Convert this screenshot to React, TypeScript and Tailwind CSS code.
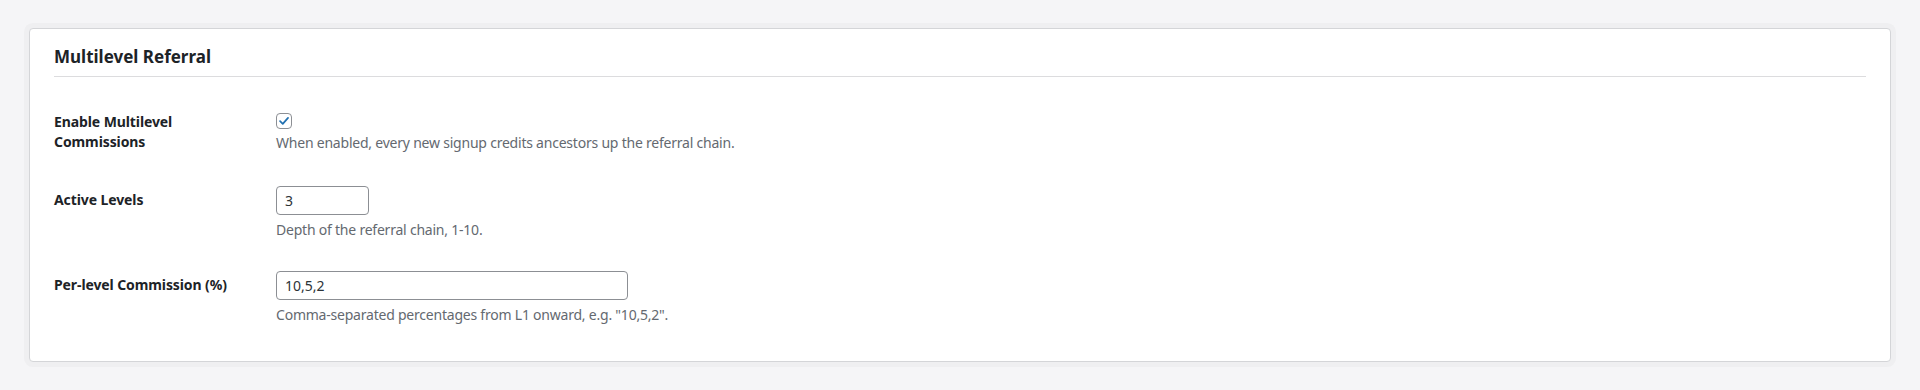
import { useState } from "react";

const font = { fontFamily: '"Noto Sans", "Open Sans", sans-serif' };

const Row = ({ label, children, className = "" }) => (
  <div className={`flex ${className}`}>
    <div className="w-[222px] shrink-0 text-[14px] font-bold leading-[20px] tracking-[-0.1px] text-[#1d2327] pr-4">
      {label}
    </div>
    <div className="flex-1">{children}</div>
  </div>
);

export default function App() {
  const [enabled, setEnabled] = useState(true);
  const [levels, setLevels] = useState("3");
  const [rates, setRates] = useState("10,5,2");

  return (
    <div className="min-h-[390px] bg-[#f5f5f7] pt-[28px] px-[29px]" style={font}>
      <div className="rounded-[4px] border border-[#d4d5d8] bg-white px-[24px] shadow-[0_0_0_5px_#efeff1]">
        <h2 className="pt-[17px] pb-[8px] text-[17px] font-bold leading-[22px] text-[#1d2327]">
          Multilevel Referral
        </h2>
        <div className="border-b border-[#dcdcde]" />

        <Row
          className="mt-[35px]"
          label={
            <>
              Enable Multilevel
              <br />
              Commissions
            </>
          }
        >
          <button
            type="button"
            onClick={() => setEnabled(!enabled)}
            className="mt-[1px] flex h-[16px] w-[16px] items-center justify-center rounded-[4px] border border-[#8c8f94] bg-white"
          >
            {enabled && (
              <svg viewBox="0 0 16 16" className="h-[14px] w-[14px]">
                <path
                  d="M3.5 8.2 L6.6 11.2 L12.6 4.4"
                  fill="none"
                  stroke="#2271b1"
                  strokeWidth="2"
                  strokeLinecap="round"
                  strokeLinejoin="round"
                />
              </svg>
            )}
          </button>
          <p className="mt-[4px] text-[14px] leading-[20px] tracking-[-0.22px] text-[#646970]">
            When enabled, every new signup credits ancestors up the referral chain.
          </p>
        </Row>

        <Row className="mt-[33px]" label={<div className="pt-[4px]">Active Levels</div>}>
          <input
            value={levels}
            onChange={(e) => setLevels(e.target.value)}
            className="h-[29px] w-[93px] rounded-[4px] border border-[#8c8f94] bg-white px-[8px] text-[14px] text-[#2c3338] outline-none"
          />
          <p className="mt-[5px] text-[14px] leading-[20px] tracking-[-0.22px] text-[#646970]">
            Depth of the referral chain, 1-10.
          </p>
        </Row>

        <Row className="mt-[31px] pb-[36px]" label={<div className="pt-[4px]">Per-level Commission (%)</div>}>
          <input
            value={rates}
            onChange={(e) => setRates(e.target.value)}
            className="h-[29px] w-[352px] rounded-[4px] border border-[#8c8f94] bg-white px-[8px] text-[14px] text-[#2c3338] outline-none"
          />
          <p className="mt-[5px] text-[14px] leading-[20px] tracking-[-0.22px] text-[#646970]">
            Comma-separated percentages from L1 onward, e.g. "10,5,2".
          </p>
        </Row>
      </div>
    </div>
  );
}
